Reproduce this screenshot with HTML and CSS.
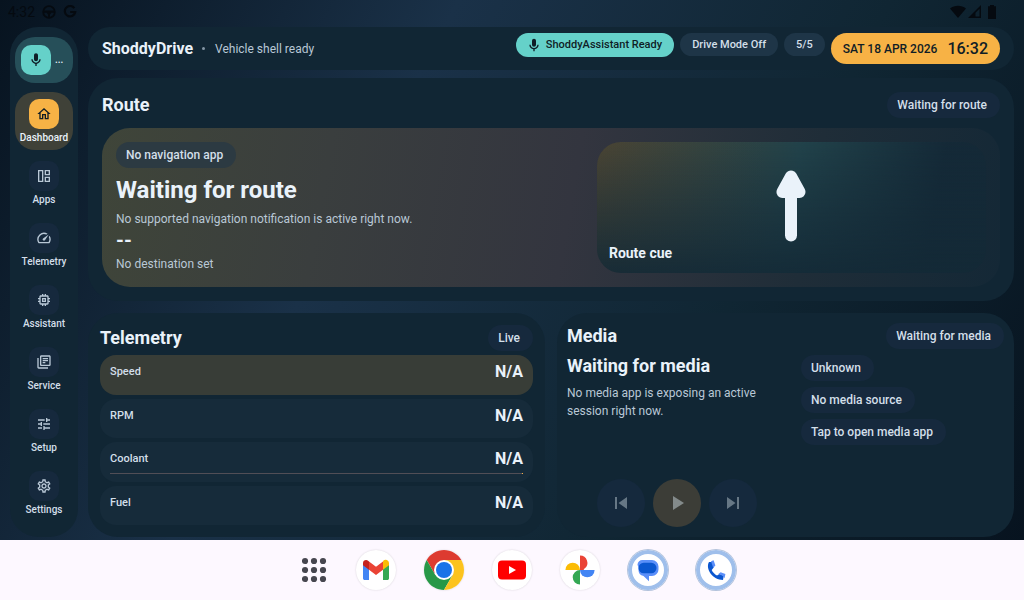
FILE: index.html
```html
<!DOCTYPE html>
<html lang="en">
<head>
<meta charset="utf-8">
<meta name="viewport" content="width=device-width,initial-scale=1">
<title>ShoddyDrive</title>
<link rel="stylesheet" href="styles.css">
</head>
<body>

<div class="shell">

  <!-- ======= STATUS BAR ======= -->
  <div class="status">
    <span class="status-time">4:32</span>
    <svg width="14" height="14" viewBox="0 0 14 14"><circle cx="7" cy="7" r="5.8" fill="none" stroke="currentColor" stroke-width="1.8"/><path d="M1 5.5h12v2.2H9.4L8 9.5V13H6V9.5L4.600 7.700H1z" fill="currentColor"/></svg>
    <svg width="14" height="14" viewBox="0 0 14 14"><path d="M11.300 3.200A5.200 5.200 0 1 0 12.200 7H7.200" fill="none" stroke="currentColor" stroke-width="2.200"/></svg>
    <span class="status-right">
      <svg width="16" height="14" viewBox="0 0 16 14"><path d="M0 3.500C4.500-.3 11.500-.3 16 3.500L8 13z" fill="currentColor"/></svg>
      <svg width="14" height="14" viewBox="0 0 14 14"><path d="M13 0v13H0zM11.500 3.800L7.500 7.800V11.500h4z" fill="currentColor" fill-rule="evenodd"/></svg>
      <svg class="battery" width="8" height="14" viewBox="0 0 8 14"><path d="M2 0h4v1.200h2V14H0V1.200h2z" fill="currentColor"/></svg>
    </span>
  </div>

  <div class="layout">

    <!-- ======= SIDEBAR ======= -->
    <nav class="sidebar">
      <button class="assist" aria-label="Assistant voice">
        <span class="tile teal"><svg class="ic" viewBox="0 0 24 24"><path d="M12 14c1.660 0 3-1.340 3-3V5c0-1.660-1.340-3-3-3S9 3.340 9 5v6c0 1.660 1.340 3 3 3z"/><path d="M17 11c0 2.760-2.240 5-5 5s-5-2.240-5-5H5c0 3.530 2.610 6.430 6 6.920V21h2v-3.080c3.390-.49 6-3.390 6-6.920h-2z"/></svg></span>
        <span>...</span>
      </button>
      <a class="nav-item active" href="#dashboard">
        <span class="tile amber"><svg class="ic" viewBox="0 0 24 24"><path d="M12 5.690l5 4.500V18h-2v-6H9v6H7v-7.810l5-4.500M12 3L2 12h3v8h6v-6h2v6h6v-8h3L12 3z"/></svg></span>
        <span>Dashboard</span>
      </a>
      <a class="nav-item" href="#apps">
        <span class="tile"><svg class="ic" viewBox="0 0 24 24"><path fill-rule="evenodd" d="M3 3h8v18H3zM5 5v14h4V5zM13 3h8v8h-8zM15 5v4h4V5zM13 13h8v8h-8zM15 15v4h4v-4z"/></svg></span>
        <span>Apps</span>
      </a>
      <a class="nav-item" href="#telemetry">
        <span class="tile"><svg class="ic" viewBox="0 0 24 24"><path d="M20.380 8.570l-1.230 1.850a8 8 0 0 1-.22 7.580H5.070A8 8 0 0 1 15.580 6.850l1.850-1.230A10 10 0 0 0 3.350 19a2 2 0 0 0 1.720 1h13.850a2 2 0 0 0 1.740-1 10 10 0 0 0-.27-10.440zM10.590 15.410a2 2 0 0 0 2.830 0l5.660-8.490-8.490 5.660a2 2 0 0 0 0 2.830z"/></svg></span>
        <span>Telemetry</span>
      </a>
      <a class="nav-item" href="#assistant">
        <span class="tile"><svg class="ic" viewBox="0 0 24 24"><path d="M15 9H9v6h6V9zm-2 4h-2v-2h2v2zm8-2V9h-2V7c0-1.100-.9-2-2-2h-2V3h-2v2h-2V3H9v2H7c-1.100 0-2 .9-2 2v2H3v2h2v2H3v2h2v2c0 1.100.9 2 2 2h2v2h2v-2h2v2h2v-2h2c1.100 0 2-.9 2-2v-2h2v-2h-2v-2h2zm-4 6H7V7h10v10z"/></svg></span>
        <span>Assistant</span>
      </a>
      <a class="nav-item" href="#service">
        <span class="tile"><svg class="ic" viewBox="0 0 24 24"><path d="M4 6H2v14c0 1.100.9 2 2 2h14v-2H4V6zm16-4H8c-1.100 0-2 .9-2 2v12c0 1.100.9 2 2 2h12c1.100 0 2-.9 2-2V4c0-1.100-.9-2-2-2zm0 14H8V4h12v12zM10 9h8v2h-8zm0 3h4v2h-4zm0-6h8v2h-8z"/></svg></span>
        <span>Service</span>
      </a>
      <a class="nav-item" href="#setup">
        <span class="tile"><svg class="ic" viewBox="0 0 24 24"><path d="M3 17v2h6v-2H3zM3 5v2h10V5H3zm10 16v-2h8v-2h-8v-2h-2v6h2zM7 9v2H3v2h4v2h2V9H7zm14 4v-2H11v2h10zm-6-4h2V7h4V5h-4V3h-2v6z"/></svg></span>
        <span>Setup</span>
      </a>
      <a class="nav-item" href="#settings">
        <span class="tile"><svg class="ic" viewBox="0 0 24 24"><path d="M19.430 12.980c.04-.32.07-.64.07-.98 0-.34-.03-.66-.07-.98l2.110-1.650c.19-.15.24-.42.12-.64l-2-3.460c-.09-.16-.26-.25-.44-.25-.06 0-.12.010-.17.030l-2.490 1c-.52-.4-1.080-.73-1.690-.98l-.38-2.650C14.460 2.180 14.250 2 14 2h-4c-.25 0-.46.18-.49.42l-.38 2.650c-.61.25-1.170.59-1.690.98l-2.490-1c-.06-.02-.12-.03-.18-.03-.17 0-.34.09-.43.25l-2 3.460c-.13.22-.07.49.12.64l2.110 1.650c-.04.32-.07.65-.07.98 0 .33.030.66.070.98l-2.110 1.650c-.19.15-.24.42-.12.64l2 3.460c.09.16.26.25.44.25.06 0 .12-.01.17-.03l2.490-1c.52.4 1.080.73 1.690.98l.38 2.650c.03.24.24.42.49.42h4c.25 0 .46-.18.49-.42l.38-2.650c.61-.25 1.170-.59 1.690-.98l2.490 1c.06.02.12.03.18.03.17 0 .34-.09.43-.25l2-3.460c.12-.22.07-.49-.12-.64l-2.110-1.650zm-1.980-1.710c.04.31.05.52.05.73 0 .21-.02.43-.05.73l-.14 1.130.89.7 1.080.84-.7 1.210-1.270-.51-1.040-.42-.9.68c-.43.32-.84.56-1.250.73l-1.060.43-.16 1.130-.2 1.350h-1.400l-.19-1.350-.16-1.130-1.060-.43c-.43-.18-.83-.41-1.230-.71l-.91-.7-1.060.43-1.270.51-.7-1.210 1.080-.84.89-.7-.14-1.130c-.03-.31-.05-.54-.05-.74s.02-.43.05-.73l.14-1.130-.89-.7-1.080-.84.7-1.210 1.270.51 1.040.42.9-.68c.43-.32.84-.56 1.250-.73l1.060-.43.16-1.130.2-1.350h1.390l.19 1.350.16 1.130 1.060.43c.43.18.83.41 1.230.71l.91.7 1.060-.43 1.270-.51.7 1.210-1.070.85-.89.7.14 1.130zM12 8c-2.210 0-4 1.790-4 4s1.790 4 4 4 4-1.790 4-4-1.790-4-4-4zm0 6c-1.100 0-2-.9-2-2s.9-2 2-2 2 .9 2 2-.9 2-2 2z"/></svg></span>
        <span>Settings</span>
      </a>
    </nav>

    <main class="main">

      <!-- ======= TOP BAR ======= -->
      <header class="topbar">
        <h1>ShoddyDrive</h1>
        <span class="dot"></span>
        <p class="muted">Vehicle shell ready</p>
        <div class="chips">
          <button class="chip assist-chip"><svg width="12" height="14" viewBox="4 1 16 21"><path d="M12 14c1.660 0 3-1.340 3-3V5c0-1.660-1.340-3-3-3S9 3.340 9 5v6c0 1.660 1.340 3 3 3z"/><path d="M17 11c0 2.760-2.240 5-5 5s-5-2.240-5-5H5c0 3.530 2.610 6.430 6 6.920V21h2v-3.080c3.390-.49 6-3.390 6-6.920h-2z"/></svg>ShoddyAssistant Ready</button>
          <span class="chip">Drive Mode Off</span>
          <span class="chip">5/5</span>
          <div class="clock"><span>SAT 18 APR 2026</span><strong>16:32</strong></div>
        </div>
      </header>

      <!-- ======= ROUTE ======= -->
      <section class="card route">
        <div class="card-head">
          <h2>Route</h2>
          <span class="pill">Waiting for route</span>
        </div>
        <div class="route-panel">
          <div class="route-info">
            <span class="pill pill-nav">No navigation app</span>
            <h3>Waiting for route</h3>
            <p class="muted">No supported navigation notification is active right now.</p>
            <strong class="distance">--</strong>
            <p class="muted">No destination set</p>
          </div>
          <div class="cue">
            <svg width="30" height="72" viewBox="0 0 30 72"><path d="M15 6.500L6.500 22h17z" fill="currentColor" stroke="currentColor" stroke-width="12" stroke-linejoin="round"/><path d="M15 20v45.500" stroke="currentColor" stroke-width="12" stroke-linecap="round"/></svg>
            <span>Route cue</span>
          </div>
        </div>
      </section>

      <div class="bottom">

        <!-- ======= TELEMETRY ======= -->
        <section class="card telemetry">
          <div class="card-head">
            <h2>Telemetry</h2>
            <span class="pill">Live</span>
          </div>
          <dl class="metrics">
            <div class="metric hot"><dt>Speed</dt><dd>N/A</dd></div>
            <div class="metric"><dt>RPM</dt><dd>N/A</dd></div>
            <div class="metric bar"><dt>Coolant</dt><dd>N/A</dd></div>
            <div class="metric"><dt>Fuel</dt><dd>N/A</dd></div>
          </dl>
        </section>

        <!-- ======= MEDIA ======= -->
        <section class="card media">
          <div class="card-head">
            <h2>Media</h2>
            <span class="pill">Waiting for media</span>
          </div>
          <div class="media-body">
            <div class="now">
              <h2>Waiting for media</h2>
              <p class="muted">No media app is exposing an active session right now.</p>
              <div class="controls">
                <button aria-label="Previous" disabled><svg width="24" height="24" viewBox="0 0 24 24"><path d="M6 6h2v12H6zm3.500 6l8.500 6V6z"/></svg></button>
                <button class="play" aria-label="Play" disabled><svg width="24" height="24" viewBox="0 0 24 24"><path d="M8 5v14l11-7z"/></svg></button>
                <button aria-label="Next" disabled><svg width="24" height="24" viewBox="0 0 24 24"><path d="M6 18l8.500-6L6 6v12zM16 6v12h2V6h-2z"/></svg></button>
              </div>
            </div>
            <div class="source">
              <span class="pill">Unknown</span>
              <span class="pill">No media source</span>
              <button class="pill">Tap to open media app</button>
            </div>
          </div>
        </section>
      </div>
    </main>
  </div>
</div>

<!-- ======= DOCK ======= -->
<footer class="dock">
  <button class="all-apps" aria-label="All apps">
    <svg width="26" height="26" viewBox="0 0 26 26"><g fill="#46464f"><circle cx="3" cy="4" r="3.100"/><circle cx="12" cy="4" r="3.100"/><circle cx="21" cy="4" r="3.100"/><circle cx="3" cy="13" r="3.100"/><circle cx="12" cy="13" r="3.100"/><circle cx="21" cy="13" r="3.100"/><circle cx="3" cy="22" r="3.100"/><circle cx="12" cy="22" r="3.100"/><circle cx="21" cy="22" r="3.100"/></g></svg>
  </button>
  <button class="app" aria-label="Gmail">
    <svg viewBox="0 0 40 40">
      <path d="M7 13v15.200c0 1 .8 1.800 1.800 1.800H13V16z" fill="#4285f4"/>
      <path d="M27 16V30h4.200c1 0 1.800-.8 1.800-1.800V13z" fill="#34a853"/>
      <path d="M27 11.500v8.300l6-4.600v-2c0-3-3.300-4.600-5.500-2.800z" fill="#fbbc04"/>
      <path d="M13 19.800v-8.400l7 5.300 7-5.300v8.400l-7 5.300z" fill="#ea4335"/>
      <path d="M7 13.200v2l6 4.600v-8.400l-.6-.5C10.200 9 7 10.200 7 13.200z" fill="#c5221f"/>
    </svg>
  </button>
  <button class="app" aria-label="Chrome">
    <svg viewBox="0 0 40 40">
      <path d="M20 10H37.300A20 20 0 0 0 2.700 10L11.340 25z" fill="#dd3b30"/>
      <path d="M11.340 25L2.700 10A20 20 0 0 0 20 40L28.660 25z" fill="#279847"/>
      <path d="M28.660 25L20 40A20 20 0 0 0 37.300 10H20z" fill="#fcc31e"/>
      <circle cx="20" cy="20" r="10" fill="#fff"/><circle cx="20" cy="20" r="8" fill="#1a73e8"/>
    </svg>
  </button>
  <button class="app" aria-label="YouTube">
    <svg viewBox="0 0 40 40"><rect x="6" y="10.500" width="28" height="19" rx="4" fill="#f00"/><path d="M17 16v8l7-4z" fill="#fff"/></svg>
  </button>
  <button class="app" aria-label="Photos">
    <svg viewBox="0 0 40 40">
      <path d="M20 20V5.500a7.300 7.300 0 0 1 4.500 13.100L23.500 20z" fill="#ea4335"/>
      <path d="M20 20H34.600a7.300 7.300 0 0 1-14.600 0z" fill="#4285f4"/>
      <path d="M20 20v14.600a7.300 7.300 0 0 1 0-14.600z" fill="#34a853"/>
      <path d="M20 20H5.400a7.300 7.300 0 0 1 14.600 0z" fill="#fbbc04"/>
    </svg>
  </button>
  <button class="app ringed" aria-label="Messages">
    <svg viewBox="0 0 40 40">
      <path d="M14.500 10H24a6.500 6.500 0 0 1 6.500 6.500v3A6.500 6.500 0 0 1 24 26h-3v5.300L15.500 26a6 6 0 0 1-5-6V17a5 5 0 0 1-1-2.500A4.800 4.800 0 0 1 14.500 10z" fill="#5b8ff9"/>
      <rect x="10.500" y="12.800" width="18" height="10.400" rx="5.200" fill="#0b57d0"/>
    </svg>
  </button>
  <button class="app ringed" aria-label="Phone">
    <svg viewBox="0 0 40 40">
      <path d="M13 12c-4 7 4 18 14 18l.8-4.300-4.300-1.700-2.500 1.500c-2.500-1.300-4.300-3.200-5.300-5.500l2-2.500-1.200-5.500z" fill="#0b57d0"/>
      <path d="M15 11.200l2.600-1 1.800 5.200-2.200 2.400zM22.400 24l2.200-1.800 4.800 1.800-.9 4.300-1.800-2.600z" fill="#5b8ff9"/>
    </svg>
  </button>
</footer>

</body>
</html>
```
FILE: styles.css
```css
/* ---------- PALETTE ---------- */
:root{
  --card:#112634;
  --pill:#16293d;
  --row:#162b3a;
  --text:#eaf2fa;
  --muted:#b9c8d6;
  --amber:#f7b245;
  --teal:#65d1c9;
  --ink:#0f1d26;
}

/* ---------- RESET ---------- */
*{margin:0;padding:0;box-sizing:border-box;}
body{font-family:Roboto,"Liberation Sans",sans-serif;color:var(--text);min-height:100vh;display:flex;flex-direction:column;font-size:12px;line-height:18px;}
button{font:inherit;color:inherit;border:none;background:none;cursor:pointer;}
a{color:inherit;text-decoration:none;}
svg{display:block;fill:currentColor;flex:none;}
h1{font-size:16px;font-weight:700;}
h2{font-size:18px;line-height:24px;font-weight:700;}
.muted{color:var(--muted);}

/* ---------- SHELL ---------- */
.shell{flex:1;display:flex;flex-direction:column;background:linear-gradient(118deg,#07131f 0%,#1a3148 35%,#102633 68%,#07131f 100%);}
.status{height:27px;padding:0 28px 4px 8px;display:flex;align-items:center;gap:7px;color:#050a10;font-size:14px;}
.status-right{margin-left:auto;display:flex;gap:2px;}
.battery{margin-left:4px;}
.layout{flex:1;display:flex;gap:10px;padding:0 10px 3px;}

/* ---------- SIDEBAR ---------- */
.sidebar{width:68px;flex:none;background:var(--card);border-radius:28px;padding:10px 5px;display:flex;flex-direction:column;gap:4px;}
.assist{height:46px;margin-bottom:5px;padding:0 6px;border-radius:20px;background:#264f59;display:flex;align-items:center;gap:4px;font-size:10px;font-weight:500;}
.tile{width:30px;height:30px;border-radius:10px;background:var(--pill);display:grid;place-items:center;}
.teal{background:var(--teal);color:var(--ink);}
.amber{background:var(--amber);color:var(--ink);}
.ic{width:16px;height:16px;}
.nav-item{height:58px;padding-top:7px;border-radius:20px;display:flex;flex-direction:column;align-items:center;gap:1px;font-size:10px;line-height:16px;font-weight:500;color:#d3dfe9;}
.nav-item.active{background:#3f4138;color:var(--text);}
.nav-item:not(.active) .tile{color:var(--muted);}

/* ---------- TOP BAR ---------- */
.main{flex:1;min-width:0;display:flex;flex-direction:column;}
.topbar{background:var(--card);border-radius:22px;padding:6px 14px;margin-bottom:8px;display:flex;align-items:center;}
.dot{width:3px;height:3px;border-radius:50%;background:#8496a5;margin:0 10px 0 9px;}
.chips{margin-left:auto;display:flex;align-items:flex-start;gap:6px;}
.chip{display:flex;align-items:center;height:23px;padding:0 12px;border-radius:12px;background:#1e3547;color:#d3dfe9;font-size:11px;font-weight:500;}
.assist-chip{height:24px;gap:6px;background:var(--teal);color:var(--ink);}
.clock{display:flex;align-items:center;gap:10px;height:31px;padding:0 12px;border-radius:16px;background:var(--amber);color:var(--ink);font-weight:500;}
.clock strong{font-size:16px;font-weight:500;}

/* ---------- CARDS ---------- */
.card{background:var(--card);border-radius:30px;}
.card-head{display:flex;justify-content:space-between;align-items:center;}
.pill{display:inline-block;padding:4px 13px 4px 10px;border-radius:13px;background:var(--pill);color:#d3dfe9;font-weight:500;}

/* ---------- ROUTE ---------- */
.route{padding:14px;margin-bottom:12px;}
.route-panel{margin-top:10px;padding:14px;border-radius:28px;display:grid;grid-template-columns:6fr 5fr;gap:14px;
  background:linear-gradient(100deg,#3f4539 0%,#3a3e3e 25%,#33353f 52%,#1f2d38 78%,#142836 100%);}
.route-info{display:flex;flex-direction:column;align-items:flex-start;}
.pill-nav{background:#2c3a42;}
.route-info h3{font-size:24px;line-height:32px;margin:6px 0 4px;}
.distance{font-size:20px;line-height:25px;}
.route-info p:last-child{margin-top:2px;}
.cue{position:relative;display:grid;place-items:center;padding-bottom:4px;border-radius:24px;
  background:linear-gradient(to bottom,transparent,rgba(19,41,54,.9)),linear-gradient(100deg,#4a4433 0%,#21424a 50%,#142937 85%);}
.cue span{position:absolute;left:12px;bottom:11px;font-size:14px;font-weight:700;}

/* ---------- TELEMETRY ---------- */
.bottom{flex:1;display:grid;grid-template-columns:1fr 1fr;gap:12px;}
.bottom .card{display:flex;flex-direction:column;}
.telemetry{padding:12px;}
.metrics{flex:1;margin-top:4px;display:grid;gap:4px;}
.metric{display:flex;justify-content:space-between;align-items:flex-start;padding:8px 10px;border-radius:16px;background:var(--row);position:relative;}
.metric.hot{background:#383d37;}
.metric dt{font-size:11px;font-weight:500;color:#d3dfe9;}
.metric dd{font-size:16px;font-weight:700;}
.metric.bar::after{content:"";position:absolute;left:10px;right:10px;bottom:8px;height:1px;background:linear-gradient(to left,var(--amber) 1px,#514e56 1px);}

/* ---------- MEDIA ---------- */
.media{padding:10px;}
.media-body{flex:1;margin-top:6px;display:grid;grid-template-columns:13fr 12fr;gap:14px;}
.now{display:flex;flex-direction:column;}
.now h2{line-height:22px;margin-bottom:7px;}
.controls{margin-top:auto;display:flex;justify-content:center;gap:8px;}
.controls button{width:48px;height:48px;border-radius:50%;background:#15293d;color:#667785;display:grid;place-items:center;}
.controls .play{background:#3c3d37;color:#838a8a;}
.source{display:flex;flex-direction:column;align-items:flex-start;gap:6px;}

/* ---------- DOCK ---------- */
.dock{height:60px;padding-left:14px;background:#fdf8ff;display:flex;justify-content:center;align-items:center;gap:28px;}
.app{width:40px;height:40px;border-radius:50%;background:#fff;box-shadow:0 0 2px rgba(0,0,0,.16);}
.ringed{box-shadow:inset 0 0 0 4px #9fbfeb,0 0 0 1px #b4c3dc;}
```
